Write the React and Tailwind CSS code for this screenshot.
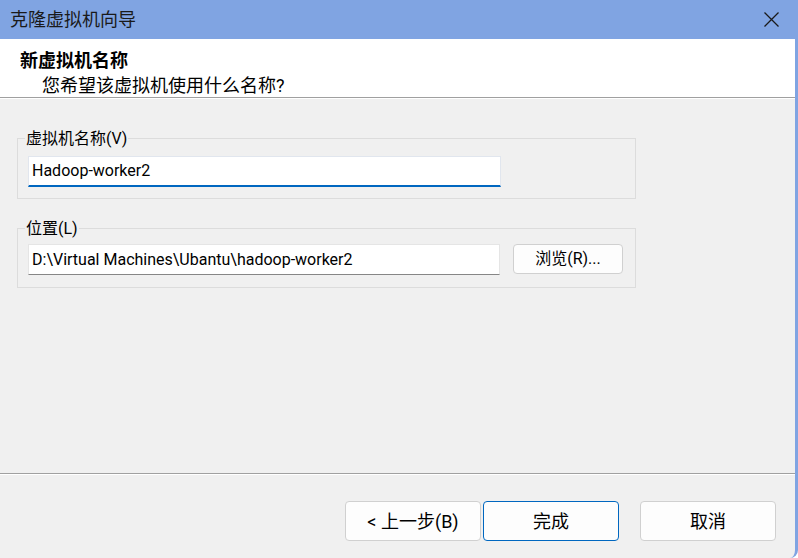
import React from "react";

const font = "font-['Roboto','Noto_Sans_CJK_SC',sans-serif]";

function CloseIcon() {
  return (
    <svg width="15" height="15" viewBox="0 0 15 15" fill="none">
      <path d="M0.5 0.5 L14.5 14.5 M14.5 0.5 L0.5 14.5" stroke="#1a1a1a" strokeWidth="1.3" />
    </svg>
  );
}

function Group({ label, children, labelGap, bottom }) {
  return (
    <div className={`w-[619px] border border-[#dcdcdc] pl-[10px] ${bottom}`}>
      <div className="-mt-[11px] -ml-[3px] w-fit bg-[#f0f0f0] px-[1px] h-[22px] leading-[22px] text-[16px] text-black">
        {label}
      </div>
      <div className={labelGap}>{children}</div>
    </div>
  );
}

export default function App() {
  return (
    <div
      className={`w-[798px] h-[558px] flex flex-col bg-[#f0f0f0] border-r-[3px] border-[#80a4e2] rounded-br-[8px] overflow-hidden ${font}`}
    >
      {/* title bar */}
      <div className="h-[39px] shrink-0 bg-[#80a4e2] flex items-center justify-between pl-[10px] pr-[16px]">
        <span className="text-[18px] leading-[22px] text-[#1a1a1a]">克隆虚拟机向导</span>
        <CloseIcon />
      </div>

      {/* wizard page header */}
      <div className="h-[58px] shrink-0 bg-white pl-[20px] pt-[11px]">
        <div className="text-[18px] leading-[22px] font-bold text-black">新虚拟机名称</div>
        <div className="mt-[3px] pl-[22px] text-[18px] leading-[22px] text-black">
          您希望该虚拟机使用什么名称?
        </div>
      </div>
      <div className="h-px shrink-0 bg-[#a0a0a0]" />
      <div className="h-px shrink-0 bg-white" />

      {/* form */}
      <div className="h-[374px] shrink-0 pl-[17px] pt-[39px]">
        <Group label="虚拟机名称(V)" labelGap="mt-[6px]" bottom="pb-[11px]">
          <div className="w-[473px] h-[31px] bg-white border border-[#e1e6ee] border-b-2 border-b-[#0067c0] flex items-center pl-[3px] text-[16px] text-black">
            Hadoop-worker2
          </div>
        </Group>

        <div className="mt-[29px]">
          <Group label="位置(L)" labelGap="mt-[4px]" bottom="pb-[12px]">
            <div className="flex items-start">
              <div className="w-[472px] h-[31px] bg-white border border-[#e5e5e5] border-b-[#868686] flex items-center pl-[3px] text-[16px] text-black">
                D:\Virtual Machines\Ubantu\hadoop-worker2
              </div>
              <button className="ml-[13px] w-[110px] h-[30px] rounded-[4px] border border-[#d0d0d0] bg-[#fdfdfd] text-[16px] text-black">
                浏览(R)...
              </button>
            </div>
          </Group>
        </div>
      </div>

      <div className="h-px shrink-0 bg-[#a0a0a0]" />
      <div className="h-px shrink-0 bg-white" />

      {/* footer buttons */}
      <div className="flex-1 flex justify-end items-start pt-[26px] pr-[19px]">
        <button className="w-[136px] h-[40px] rounded-[4px] border border-[#d0d0d0] bg-[#fdfdfd] text-[18px] text-black">
          &lt; 上一步(B)
        </button>
        <button className="ml-[2px] w-[136px] h-[40px] rounded-[4px] border border-[#0067c0] bg-[#fdfdfd] text-[18px] text-black">
          完成
        </button>
        <button className="ml-[21px] w-[136px] h-[40px] rounded-[4px] border border-[#d0d0d0] bg-[#fdfdfd] text-[18px] text-black">
          取消
        </button>
      </div>
    </div>
  );
}
